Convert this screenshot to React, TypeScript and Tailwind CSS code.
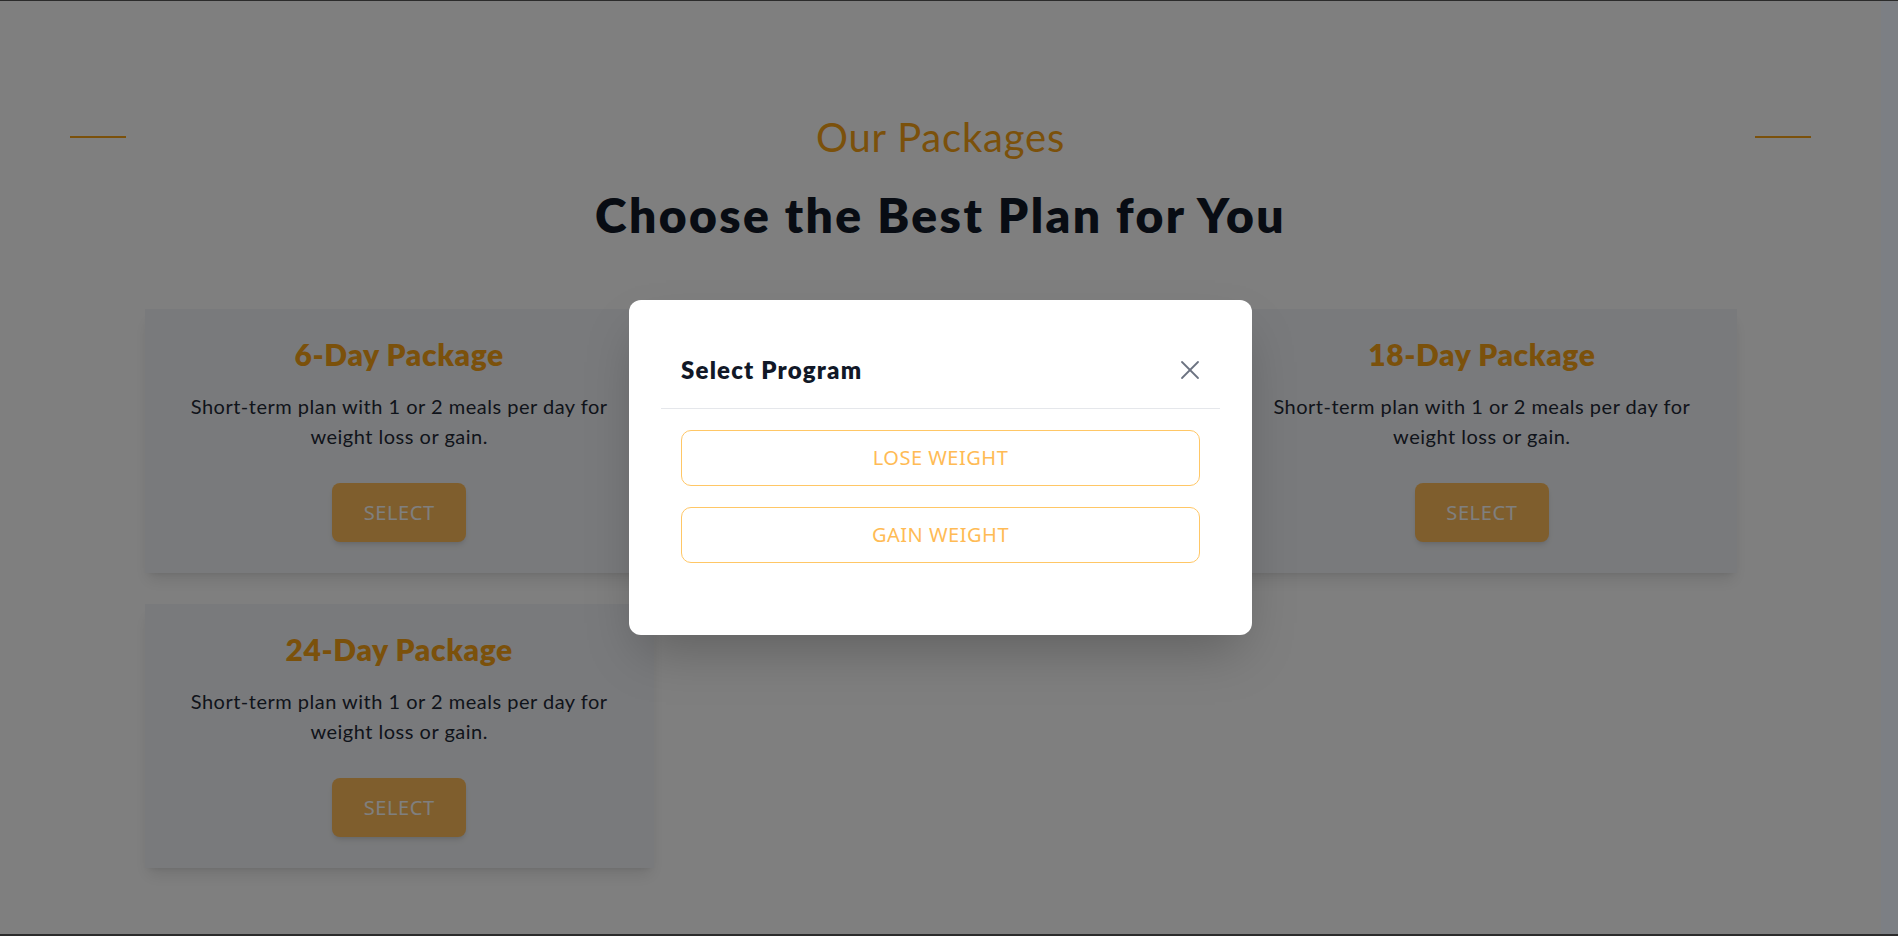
import React from "react";

type Pkg = { title: string; desc: string };

const packages: Pkg[] = [
  { title: "6-Day Package", desc: "Short-term plan with 1 or 2 meals per day for weight loss or gain." },
  { title: "12-Day Package", desc: "Short-term plan with 1 or 2 meals per day for weight loss or gain." },
  { title: "18-Day Package", desc: "Short-term plan with 1 or 2 meals per day for weight loss or gain." },
  { title: "24-Day Package", desc: "Short-term plan with 1 or 2 meals per day for weight loss or gain." },
];

const PackageCard = ({ pkg }: { pkg: Pkg }) => {
  return (
    <div className="flex flex-col items-center bg-[#f3f5f8] px-8 pt-[27px] pb-[31px] text-center shadow-lg">
      <h3 className="text-[30px] leading-[36px] font-extrabold tracking-[0.6px] text-[#f7a216]">{pkg.title}</h3>
      <p className="mt-[19px] text-[20px] leading-[30px] tracking-[0.5px] text-[#1f2937]">{pkg.desc}</p>
      <button className="mt-8 h-[59px] w-[134px] rounded-lg bg-[#ffbc5a] font-['Noto_Sans',sans-serif] text-[20px] tracking-[0.6px] text-white shadow-md">
        SELECT
      </button>
    </div>
  );
};

const ProgramModal = () => {
  return (
    <div className="w-[623px] rounded-xl bg-white p-8 shadow-2xl">
      <div className="flex items-center justify-between border-b border-[#e5e7eb] px-5 py-5">
        <span className="text-[24px] leading-[28px] font-extrabold tracking-[1.2px] text-[#111827]">
          Select Program
        </span>
        <button className="flex h-9 w-5 items-center justify-center">
          <svg width="20" height="20" viewBox="0 0 20 20" fill="none" stroke="#6b7280" strokeWidth="1.8" strokeLinecap="round">
            <line x1="2" y1="2" x2="18" y2="18" />
            <line x1="18" y1="2" x2="2" y2="18" />
          </svg>
        </button>
      </div>
      <div className="flex flex-col gap-[21px] px-5 pt-[21px] pb-10">
        {["LOSE WEIGHT", "GAIN WEIGHT"].map((label) => (
          <button
            key={label}
            className="h-14 w-full rounded-[10px] border border-[#ffc766] bg-white font-['Noto_Sans',sans-serif] text-[20px] tracking-[0.5px] text-[#ffbb55]"
          >
            {label}
          </button>
        ))}
      </div>
    </div>
  );
};

export default function App() {
  return (
    <div className="flex h-[936px] w-full overflow-hidden border-t border-b-2 border-[#2b2b2b] bg-white font-['Lato','Noto_Sans',sans-serif]">
      <div className="relative flex-1">
        <section className="pt-[112px]">
          <div className="flex items-center justify-between px-[70px]">
            <span className="h-[2px] w-14 bg-[#f7a216]" />
            <h2 className="text-[40px] leading-[48px] tracking-[0.8px] text-[#f7a216]">Our Packages</h2>
            <span className="h-[2px] w-14 bg-[#f7a216]" />
          </div>
          <h1 className="mt-[26px] text-center text-[48px] leading-[56px] font-extrabold tracking-[2.4px] text-[#111827]">
            Choose the Best Plan for You
          </h1>
          <div className="mx-auto mt-[66px] grid w-[1592px] grid-cols-3 gap-x-8 gap-y-[31px]">
            {packages.map((p) => (
              <PackageCard key={p.title} pkg={p} />
            ))}
          </div>
        </section>

        <div className="absolute inset-0 flex items-center justify-center bg-black/50">
          <ProgramModal />
        </div>
      </div>
      <div className="w-[17px] bg-[#7c7f84]" />
    </div>
  );
}
